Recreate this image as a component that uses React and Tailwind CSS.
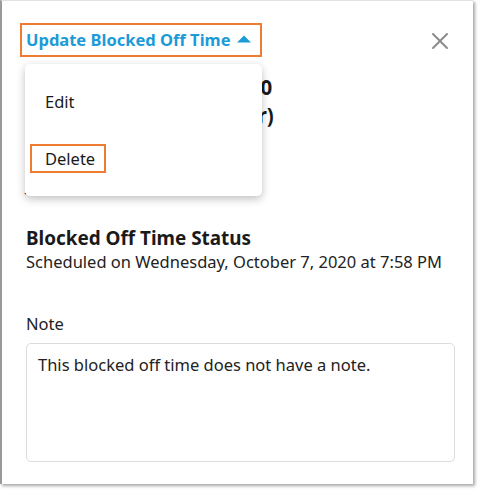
import { X } from 'lucide-react'

export default function App() {
  return (
    <div className="w-[480px] h-[491px] bg-white" style={{ fontFamily: '"Noto Sans", "Open Sans", sans-serif' }}>
      <div className="relative w-[473px] h-[484px] bg-white border-l-2 border-t border-l-[#9a9a9a] border-t-[#e2e2e2] shadow-[2px_2px_3px_rgba(0,0,0,0.35)] pl-[18px] pt-[22px] pr-[19px]">
        {/* Header */}
        <div className="flex items-center justify-between">
          <button className="h-[34px] border-2 border-[#ee7d31] pl-[4px] pr-[9px] flex items-center gap-[6px] text-[16.5px] font-bold text-[#1b9bd7] leading-none">
            Update Blocked Off Time
            <svg width="14" height="8" viewBox="0 0 14 8" className="mt-[-2px]"><path d="M0 7.5 L7 0.5 L14 7.5 Z" fill="#1b9bd7" /></svg>
          </button>
          <X size={28} strokeWidth={1.7} className="text-[#8c8c8c] mt-[2px]" />
        </div>

        {/* Details, partly under the menu */}
        <div className="pl-[6px]">
          <div className="mt-[16px] text-[20.5px] leading-[28px] font-bold text-[#1a1a1a]">
            <p>Blocked on Oct. 07, 2020</p>
            <p>7:58 PM to 8:58 PM (1 hr)</p>
          </div>
          <p className="mt-[44px] text-[16.5px] leading-[24px] text-[#222]">Jolly, Peyton, Quigley</p>

          <h2 className="mt-[29px] text-[18.9px] leading-[24px] font-bold text-[#1a1a1a]">Blocked Off Time Status</h2>
          <p className="text-[16.5px] leading-[24px] text-[#222]">Scheduled on Wednesday, October 7, 2020 at 7:58 PM</p>

          <p className="mt-[38px] text-[16.5px] leading-[24px] text-[#222]">Note</p>
          <div className="mt-[7px] w-[429px] h-[119px] border border-[#dcdcdc] rounded-[5px] pl-[11px] pt-[9px]">
            <p className="text-[16.5px] leading-[24px] text-[#222]">This blocked off time does not have a note.</p>
          </div>
        </div>

        {/* Dropdown menu */}
        <div className="absolute left-[23px] top-[63px] w-[237px] h-[132px] bg-white rounded-[5px] shadow-[0_3px_8px_rgba(0,0,0,0.25)] text-[16.5px] leading-[24px] text-[#1a1a1a]">
          <div className="pl-[20px] pt-[26px]">Edit</div>
          <div className="ml-[5px] mt-[30px] w-[76px] h-[29px] border-2 border-[#ee7d31] flex items-center pl-[13px]">Delete</div>
        </div>
      </div>
    </div>
  )
}
